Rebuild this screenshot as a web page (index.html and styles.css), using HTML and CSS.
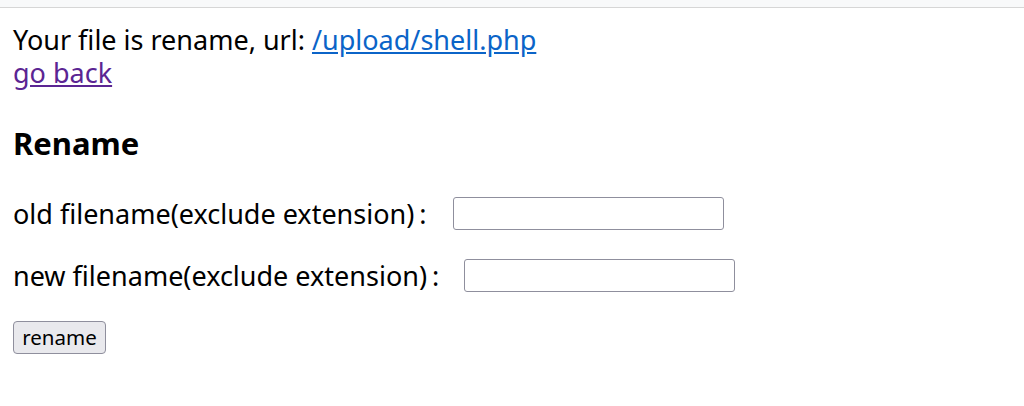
FILE: index.html
```html
<!DOCTYPE html>
<html>
<head>
<meta charset="utf-8">
<title>Rename</title>
<link rel="stylesheet" href="styles.css">
</head>
<body>
<div class="topbar"></div>
<div class="page">
  <div class="info">
    <div class="line">Your file is rename, url: <a class="link" href="#">/upload/shell.php</a></div>
    <div class="line"><a class="back" href="#">go back</a></div>
  </div>
  <h3 class="title">Rename</h3>
  <form class="form">
    <div class="row">
      <label class="label">old filename(exclude extension)<span class="colon">:</span></label>
      <input class="field old" type="text">
    </div>
    <div class="row">
      <label class="label">new filename(exclude extension)<span class="colon">:</span></label>
      <input class="field new" type="text">
    </div>
    <div class="row">
      <button class="btn" type="button">rename</button>
    </div>
  </form>
</div>
</body>
</html>
```

FILE: styles.css
```css
html, body {
  margin: 0;
  padding: 0;
  background: #ffffff;
}
body {
  font-family: "Noto Sans", "Noto Sans CJK SC", sans-serif;
  font-size: 27px;
  color: #000000;
}
.topbar {
  height: 7px;
  background: #f8f9fa;
  border-bottom: 1px solid #d6d6d6;
}
.page {
  padding: 15px 13px 12px;
}
.info {
  line-height: 33px;
}
.link {
  color: #0b64c8;
  text-decoration: underline;
}
.back {
  color: #5b2593;
  text-decoration: underline;
}
.title {
  font-size: 31px;
  font-weight: bold;
  line-height: 38px;
  margin: 35px 0 0 0;
}
.form {
  display: flex;
  flex-direction: column;
  gap: 24px;
  margin-top: 32px;
}
.row {
  display: flex;
  align-items: center;
  height: 38px;
}
.label {
  white-space: pre;
}
.colon {
  margin-left: 5px;
}
.field {
  box-sizing: border-box;
  width: 271px;
  height: 33px;
  border: 1px solid #8f8f9d;
  border-radius: 3px;
  background: #ffffff;
  padding: 0 4px;
  font-size: 20px;
}
.field.old {
  margin-left: 26px;
}
.field.new {
  margin-left: 25px;
}
.btn {
  box-sizing: border-box;
  width: 93px;
  height: 33px;
  border: 1px solid #8f8f9d;
  border-radius: 4px;
  background: #e9e9ed;
  font-family: "Noto Sans", sans-serif;
  font-size: 20.5px;
  color: #000000;
  padding: 0;
}
```
